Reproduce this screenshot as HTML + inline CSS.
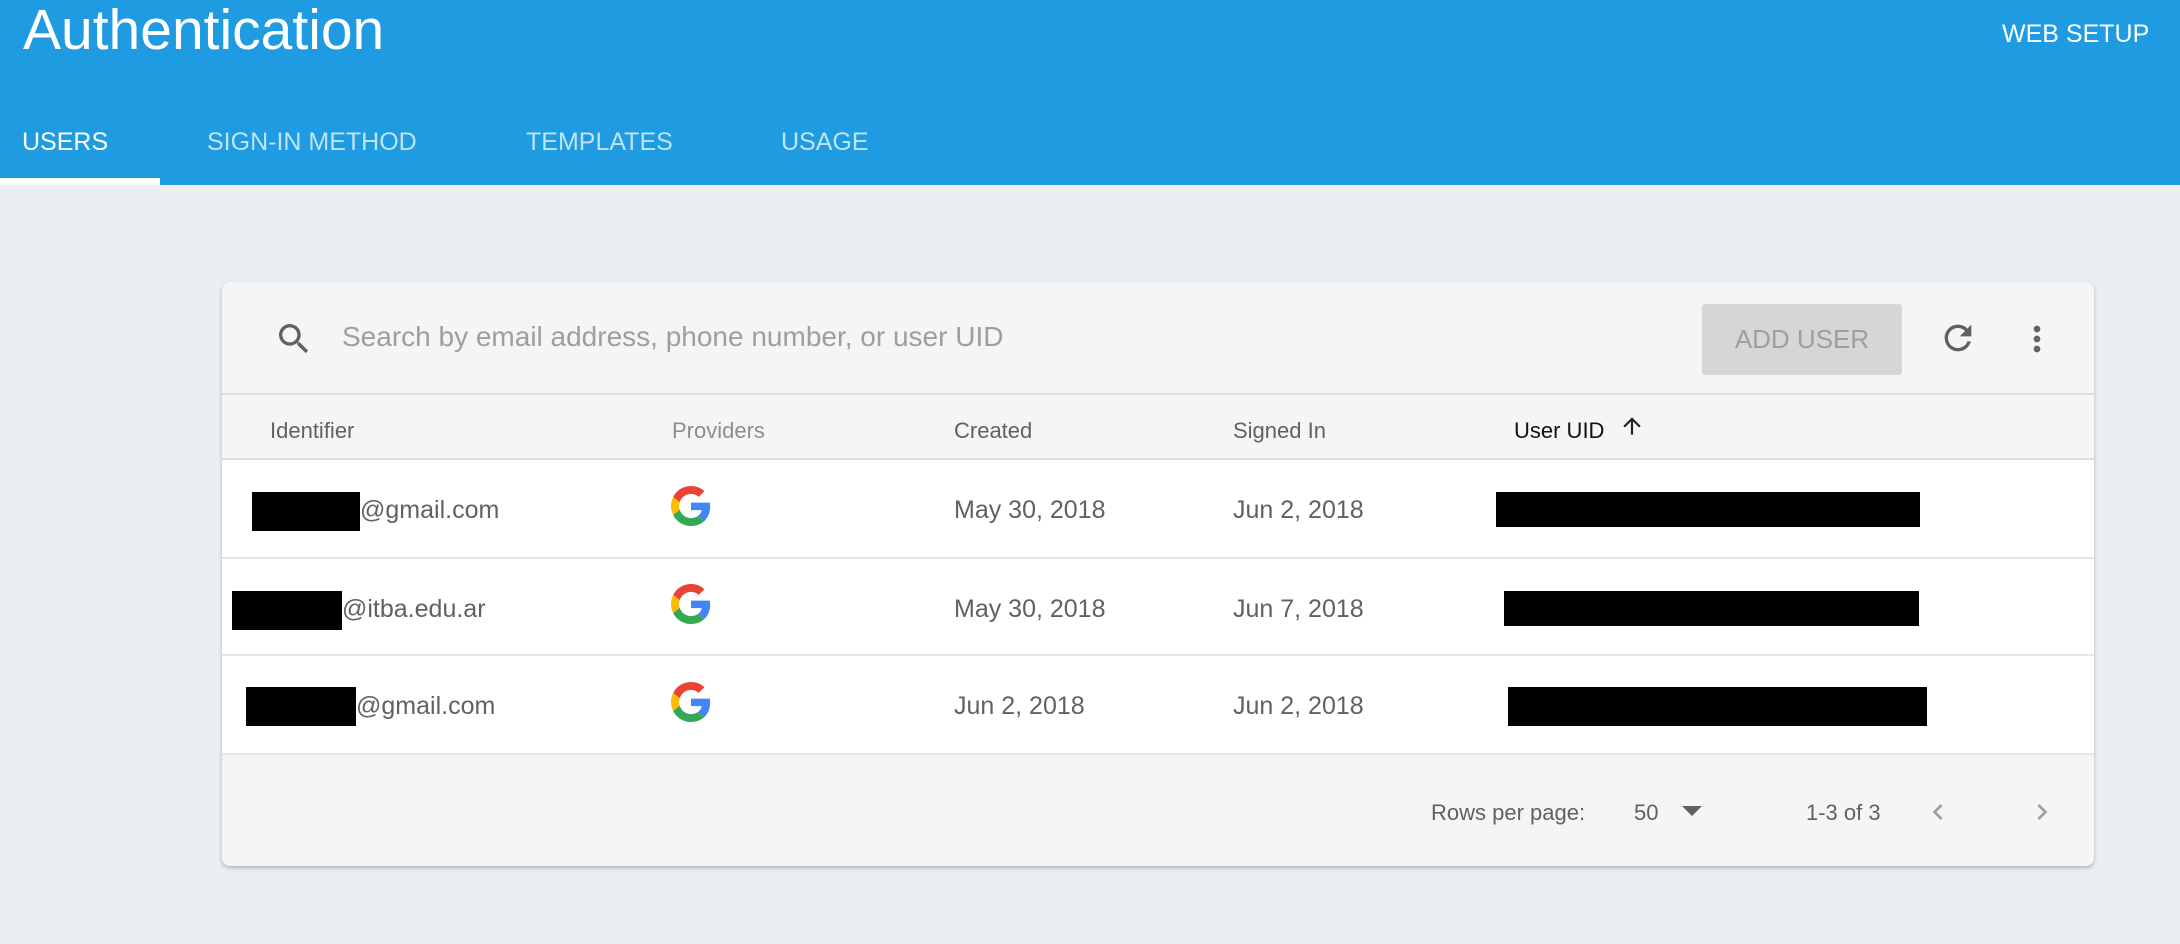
<!DOCTYPE html>
<html><head><meta charset="utf-8"><style>
*{margin:0;padding:0;box-sizing:border-box}
body{width:2180px;height:944px;background:#eceff1;font-family:"Liberation Sans",sans-serif;position:relative;overflow:hidden}
.a{position:absolute;white-space:nowrap}
.hdr{position:absolute;left:0;top:0;width:2180px;height:185px;background:#1e9be1}
.tab{position:absolute;top:128px;font-size:25px;color:#bfe3f7}
.card{position:absolute;left:222px;top:282px;width:1872px;height:584px;background:#f5f5f5;border-radius:8px;box-shadow:0 2px 4px rgba(0,0,0,.25);overflow:hidden}
.row{position:absolute;left:0;width:1872px;background:#fff;border-bottom:2px solid #e6e6e6}
.th{position:absolute;top:418px;font-size:22px;color:#616161}
.td{position:absolute;font-size:25px;color:#616161}
.blk{position:absolute;background:#000}
</style></head><body>
<div class="hdr"></div>
<div class="a" style="left:23px;top:-2px;font-size:57px;color:#fff;line-height:64px">Authentication</div>
<div class="a" style="left:2002px;top:20px;font-size:25px;color:#fff">WEB SETUP</div>
<div class="tab a" style="left:22px;color:#fff">USERS</div>
<div class="tab a" style="left:207px">SIGN-IN METHOD</div>
<div class="tab a" style="left:526px">TEMPLATES</div>
<div class="tab a" style="left:781px">USAGE</div>
<div class="a" style="left:0;top:178px;width:160px;height:7px;background:#fff"></div>

<div class="card">
 <div style="position:absolute;left:0;top:111px;width:1872px;height:2px;background:#ddd"></div>
 <div class="row" style="top:176px;height:101px;border-top:2px solid #ddd"></div>
 <div class="row" style="top:277px;height:97px"></div>
 <div class="row" style="top:374px;height:99px"></div>
</div>
<svg class="a" style="left:274px;top:319px" width="40" height="40" viewBox="0 0 24 24"><path fill="#616161" d="M15.5 14h-.79l-.28-.27A6.470 6.470 0 0 0 16 9.5 6.5 6.5 0 1 0 9.5 16c1.61 0 3.09-.59 4.23-1.57l.27.28v.79l5 4.99L20.49 19l-4.99-5zm-6 0C7.01 14 5 11.99 5 9.5S7.01 5 9.5 5 14 7.01 14 9.5 11.99 14 9.5 14z"/></svg>
<div class="a" style="left:342px;top:321px;font-size:28px;color:#9e9e9e">Search by email address, phone number, or user UID</div>
<div class="a" style="left:1702px;top:304px;width:200px;height:71px;background:#d6d6d6;border-radius:3px;color:#9e9e9e;font-size:26px;text-align:center;line-height:71px">ADD USER</div>
<svg class="a" style="left:1938px;top:318px" width="40" height="40" viewBox="0 0 24 24"><path fill="#616161" d="M17.65 6.35A7.958 7.958 0 0 0 12 4c-4.42 0-7.99 3.58-7.99 8s3.57 8 7.990 8c3.73 0 6.84-2.55 7.73-6h-2.08A5.99 5.99 0 0 1 12 18c-3.31 0-6-2.69-6-6s2.69-6 6-6c1.66 0 3.14.69 4.22 1.78L13 11h7V4l-2.35 2.35z"/></svg>
<svg class="a" style="left:2017px;top:319px" width="40" height="40" viewBox="0 0 24 24"><path fill="#616161" d="M12 8c1.1 0 2-.9 2-2s-.9-2-2-2-2 .9-2 2 .9 2 2 2zm0 2c-1.1 0-2 .9-2 2s.9 2 2 2 2-.9 2-2-.9-2-2-2zm0 6c-1.1 0-2 .9-2 2s.9 2 2 2 2-.9 2-2-.9-2-2-2z"/></svg>

<div class="th a" style="left:270px">Identifier</div>
<div class="th a" style="left:672px;color:#8e8e8e">Providers</div>
<div class="th a" style="left:954px">Created</div>
<div class="th a" style="left:1233px">Signed In</div>
<div class="th a" style="left:1514px;color:#111">User UID</div>
<svg class="a" style="left:1619px;top:413px" width="26" height="26" viewBox="0 0 24 24"><path fill="#222" d="M4 12l1.41 1.41L11 7.83V20h2V7.83l5.58 5.59L20 12l-8-8-8 8z"/></svg>

<div class="blk" style="left:252px;top:492px;width:108px;height:39px"></div>
<div class="td a" style="left:360px;top:496px">@gmail.com</div>
<div class="blk" style="left:232px;top:591px;width:110px;height:39px"></div>
<div class="td a" style="left:342px;top:595px">@itba.edu.ar</div>
<div class="blk" style="left:246px;top:687px;width:110px;height:39px"></div>
<div class="td a" style="left:356px;top:692px">@gmail.com</div>

<svg class="a" style="left:671px;top:486px" width="40" height="40" viewBox="0 0 48 48"><path fill="#EA4335" d="M24 9.5c3.54 0 6.71 1.22 9.21 3.6l6.85-6.85C35.9 2.38 30.47 0 24 0 14.62 0 6.51 5.38 2.56 13.22l7.98 6.19C12.43 13.72 17.74 9.5 24 9.5z"/><path fill="#4285F4" d="M46.98 24.55c0-1.57-.15-3.09-.38-4.55H24v9.02h12.94c-.58 2.96-2.26 5.48-4.78 7.18l7.73 6c4.51-4.18 7.09-10.36 7.09-17.65z"/><path fill="#FBBC05" d="M10.53 28.59c-.48-1.45-.76-2.99-.76-4.59s.27-3.14.76-4.59l-7.98-6.19C.92 16.46 0 20.12 0 24c0 3.88.92 7.54 2.56 10.78l7.97-6.19z"/><path fill="#34A853" d="M24 48c6.48 0 11.93-2.13 15.89-5.81l-7.73-6c-2.15 1.45-4.92 2.3-8.16 2.3-6.26 0-11.57-4.22-13.47-9.91l-7.98 6.19C6.51 42.62 14.62 48 24 48z"/></svg>
<svg class="a" style="left:671px;top:584px" width="40" height="40" viewBox="0 0 48 48"><path fill="#EA4335" d="M24 9.5c3.54 0 6.71 1.22 9.21 3.6l6.85-6.85C35.9 2.38 30.47 0 24 0 14.62 0 6.51 5.38 2.56 13.22l7.98 6.19C12.43 13.72 17.74 9.5 24 9.5z"/><path fill="#4285F4" d="M46.98 24.55c0-1.57-.15-3.09-.38-4.55H24v9.02h12.94c-.58 2.96-2.26 5.48-4.78 7.18l7.73 6c4.51-4.18 7.09-10.36 7.09-17.65z"/><path fill="#FBBC05" d="M10.53 28.59c-.48-1.45-.76-2.99-.76-4.59s.27-3.14.76-4.59l-7.98-6.19C.92 16.46 0 20.12 0 24c0 3.88.92 7.54 2.56 10.78l7.97-6.19z"/><path fill="#34A853" d="M24 48c6.48 0 11.93-2.13 15.89-5.81l-7.73-6c-2.15 1.45-4.92 2.3-8.16 2.3-6.26 0-11.57-4.22-13.47-9.91l-7.98 6.19C6.51 42.62 14.62 48 24 48z"/></svg>
<svg class="a" style="left:671px;top:682px" width="40" height="40" viewBox="0 0 48 48"><path fill="#EA4335" d="M24 9.5c3.54 0 6.71 1.22 9.21 3.6l6.85-6.85C35.9 2.38 30.47 0 24 0 14.62 0 6.51 5.38 2.56 13.22l7.98 6.19C12.43 13.72 17.74 9.5 24 9.5z"/><path fill="#4285F4" d="M46.98 24.55c0-1.57-.15-3.09-.38-4.55H24v9.02h12.94c-.58 2.96-2.26 5.48-4.78 7.18l7.73 6c4.51-4.18 7.09-10.36 7.09-17.65z"/><path fill="#FBBC05" d="M10.53 28.59c-.48-1.45-.76-2.99-.76-4.59s.27-3.14.76-4.59l-7.98-6.19C.92 16.46 0 20.12 0 24c0 3.88.92 7.54 2.56 10.78l7.97-6.19z"/><path fill="#34A853" d="M24 48c6.48 0 11.93-2.13 15.89-5.81l-7.73-6c-2.15 1.45-4.92 2.3-8.16 2.3-6.26 0-11.57-4.22-13.47-9.91l-7.98 6.19C6.51 42.62 14.62 48 24 48z"/></svg>

<div class="td a" style="left:954px;top:496px">May 30, 2018</div>
<div class="td a" style="left:1233px;top:496px">Jun 2, 2018</div>
<div class="td a" style="left:954px;top:595px">May 30, 2018</div>
<div class="td a" style="left:1233px;top:595px">Jun 7, 2018</div>
<div class="td a" style="left:954px;top:692px">Jun 2, 2018</div>
<div class="td a" style="left:1233px;top:692px">Jun 2, 2018</div>

<div class="blk" style="left:1496px;top:492px;width:424px;height:35px"></div>
<div class="blk" style="left:1504px;top:591px;width:415px;height:35px"></div>
<div class="blk" style="left:1508px;top:687px;width:419px;height:39px"></div>

<div class="a" style="left:1431px;top:800px;font-size:22px;color:#616161">Rows per page:</div>
<div class="a" style="left:1634px;top:800px;font-size:22px;color:#616161">50</div>
<svg class="a" style="left:1682px;top:804px" width="20" height="14" viewBox="0 0 20 14"><path fill="#616161" d="M0 2h20L10 12z"/></svg>
<div class="a" style="left:1806px;top:800px;font-size:22px;color:#616161">1-3 of 3</div>
<svg class="a" style="left:1922px;top:796px" width="32" height="32" viewBox="0 0 24 24"><path fill="#9e9e9e" d="M15.41 7.41L14 6l-6 6 6 6 1.41-1.41L10.83 12z"/></svg>
<svg class="a" style="left:2026px;top:796px" width="32" height="32" viewBox="0 0 24 24"><path fill="#9e9e9e" d="M10 6L8.59 7.41 13.17 12l-4.58 4.59L10 18l6-6z"/></svg>
</body></html>
